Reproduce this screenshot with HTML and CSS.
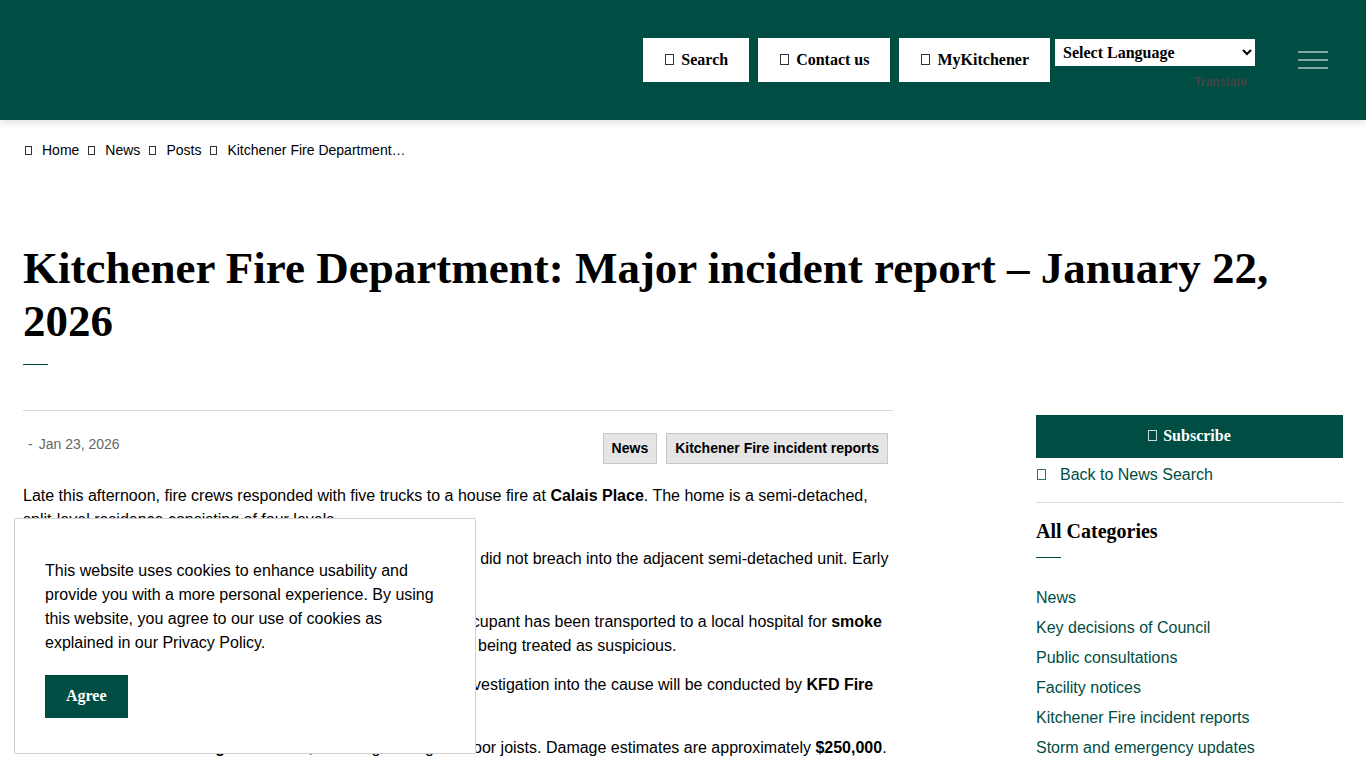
FILE: index.html
```html
<!DOCTYPE html>
<html lang="en">
  <head>
    <meta charset="UTF-8" />
    <meta name="viewport" content="width=device-width, initial-scale=1" />
    <title>Kitchener Fire Department: Major incident report – January 22, 2026</title>
    <link rel="stylesheet" href="styles.css">
  </head>
  <body>
    <header class="header">
      <button class="header-btn" type="button"><span class="glyph"></span>Search</button>
      <a class="header-btn" href="#"><span class="glyph"></span>Contact us</a>
      <a class="header-btn" href="#"><span class="glyph"></span>MyKitchener</a>
      <div class="translate">
        <select class="translate-select" aria-label="Select Language">
          <option>Select Language</option>
          <option>French</option>
        </select>
        <a class="translate-link" href="#">Translate</a>
      </div>
      <button class="menu-btn" type="button" aria-label="Menu">
        <span></span>
        <span></span>
        <span></span>
      </button>
    </header>

    <div class="page">
      <nav class="breadcrumb" aria-label="Breadcrumb">
        <a href="#"><span class="glyph small"></span>Home</a>
        <a href="#"><span class="glyph small"></span>News</a>
        <a href="#"><span class="glyph small"></span>Posts</a>
        <a href="#"><span class="glyph small"></span>Kitchener Fire Department…</a>
      </nav>

      <h1 class="page-title">
        Kitchener Fire Department: Major incident report – January 22, 2026
      </h1>

      <div class="columns">
        <main class="post">
          <div class="post-meta">
            <div class="post-date"><span>-</span><time>Jan 23, 2026</time></div>
            <div class="tags">
              <a class="tag" href="#">News</a>
              <a class="tag" href="#">Kitchener Fire incident reports</a>
            </div>
          </div>
          <p>
            Late this afternoon, fire crews responded with five trucks to a
            house fire at <strong>Calais Place</strong>. The home is a
            semi-detached, split-level residence consisting of four levels.
          </p>
          <p>
            Crews contained the blaze to the home of origin, and the flames did
            not breach into the adjacent semi-detached unit. Early reports
            indicate that the fire started inside the home.
          </p>
          <p>
            One resident was inside the home when the fire started. The
            occupant has been transported to a local hospital for
            <strong>smoke inhalation</strong>. The fire is now under control
            and at this stage is not being treated as suspicious.
          </p>
          <p>
            Crews remain at the scene to monitor hot spots overnight. An
            investigation into the cause will be conducted by
            <strong>KFD Fire Prevention Officers</strong>.
          </p>
          <p>
            The residence sustained <strong>significant</strong> fire,
            including damage to floor joists. Damage estimates are
            approximately <strong>$250,000</strong>.
          </p>
        </main>

        <aside class="sidebar">
          <a class="subscribe-btn" href="#"><span class="glyph"></span>Subscribe</a>
          <a class="back-link" href="#"><span class="glyph"></span>Back to News Search</a>
          <h2 class="sidebar-title">All Categories</h2>
          <ul class="categories">
            <li><a href="#">News</a></li>
            <li><a href="#">Key decisions of Council</a></li>
            <li><a href="#">Public consultations</a></li>
            <li><a href="#">Facility notices</a></li>
            <li><a href="#">Kitchener Fire incident reports</a></li>
            <li><a href="#">Storm and emergency updates</a></li>
          </ul>
        </aside>
      </div>
    </div>

    <div class="cookie-box" role="dialog" aria-label="Cookies">
      <p>
        This website uses cookies to enhance usability and provide you with a
        more personal experience. By using this website, you agree to our use
        of cookies as explained in our Privacy Policy.
      </p>
      <button class="agree-btn" type="button">Agree</button>
    </div>
  </body>
</html>
```

FILE: styles.css
```css
* {
  box-sizing: border-box;
}
body {
  margin: 0;
  font-family: "Liberation Sans", Arial, sans-serif;
  font-size: 16px;
  line-height: 24px;
  color: #000;
  background: #fff;
  overflow-x: hidden;
}
a {
  color: #004d43;
  text-decoration: none;
}
/* empty box shown before links and buttons */
.glyph {
  display: inline-block;
  width: 9px;
  height: 11px;
  margin-right: 7px;
  border: 1px solid currentColor;
  opacity: 0.8;
}
.glyph.small {
  width: 7px;
  height: 9px;
  margin-right: 10px;
}

/* header */
.header {
  display: flex;
  justify-content: flex-end;
  align-items: flex-start;
  height: 120px;
  padding: 38px 38px 0 23px;
  background: #004d43;
  box-shadow: 0 0 10px rgba(0, 0, 0, 0.2);
}
.header-btn {
  height: 44px;
  margin-right: 9px;
  padding: 10px 21px 10px 22px;
  border: none;
  background: #fff;
  color: #000;
  font: bold 16px/24px "Liberation Serif", "Times New Roman", serif;
  cursor: pointer;
}
.translate {
  display: flex;
  flex-direction: column;
  width: 200px;
  margin: 1px 43px 0 -4px;
}
.translate-select {
  width: 100%;
  height: 27px;
  padding: 0 4px;
  border: none;
  border-radius: 0;
  background-color: #fff;
  color: #000;
  font: bold 16px "Liberation Serif", "Times New Roman", serif;
}
.translate-link {
  align-self: flex-end;
  margin: 4px 8px 0 0;
  color: #444;
  font-size: 12px;
  font-weight: bold;
}
.menu-btn {
  display: flex;
  flex-direction: column;
  gap: 6px;
  width: 30px;
  margin-top: 13px;
  padding: 0;
  border: none;
  background: none;
  cursor: pointer;
}
.menu-btn span {
  height: 2px;
  background: #80a6a1;
}

/* page */
.page {
  padding: 0 23px;
}
.breadcrumb {
  display: flex;
  gap: 9px;
  padding: 18px 2px;
  font-size: 14px;
}
.breadcrumb a {
  color: #000;
}
.page-title {
  margin: 62px 0 45px;
  font: bold 45px/53px "Liberation Serif", "Times New Roman", serif;
}
.page-title::after,
.sidebar-title::after {
  content: "";
  display: block;
  width: 25px;
  height: 1px;
  margin-top: 14px;
  background: #004d43;
}
.page-title::after {
  margin-top: 16px;
}
.columns {
  display: flex;
  gap: 143px;
}

/* post */
.post {
  flex: 1;
  border-top: 1px solid #d9d9d9;
}
.post p {
  margin: 0 0 15px;
}
.post-meta {
  display: flex;
  justify-content: space-between;
  padding: 22px 5px 20px;
  font-size: 14px;
}
.post-date {
  display: flex;
  gap: 6px;
  color: #666;
  line-height: 22px;
}
.tags {
  display: flex;
  gap: 9px;
}
.tag {
  padding: 3px 8px;
  border: 1px solid #c8c8c8;
  background: #e5e5e5;
  color: #000;
  line-height: 23px;
  font-weight: bold;
}

/* sidebar */
.sidebar {
  width: 307px;
  padding-top: 5px;
}
.subscribe-btn {
  display: block;
  padding: 9px 20px 10px;
  background: #004d43;
  color: #fff;
  text-align: center;
  font: bold 16px/24px "Liberation Serif", "Times New Roman", serif;
}
.subscribe-btn .glyph {
  margin-right: 6px;
}
.back-link {
  display: block;
  padding: 5px 1px 15px;
  border-bottom: 1px solid #d9d9d9;
}
.back-link .glyph {
  margin-right: 14px;
}
.sidebar-title {
  margin: 16px 0 28px;
  font: bold 20px/24px "Liberation Serif", "Times New Roman", serif;
}
.categories {
  margin: 0;
  padding: 0;
  list-style: none;
}
.categories li {
  margin-bottom: 6px;
}

/* cookie notice */
.cookie-box {
  position: fixed;
  left: 14px;
  bottom: 14px;
  width: 462px;
  padding: 40px 30px 35px;
  border: 1px solid #d0d0d0;
  border-radius: 2px;
  background: #fff;
}
.cookie-box p {
  margin: 0 0 20px;
}
.agree-btn {
  display: block;
  padding: 9px 21px 10px;
  border: none;
  background: #004d43;
  color: #fff;
  font: bold 16px/24px "Liberation Serif", "Times New Roman", serif;
  cursor: pointer;
}
```
